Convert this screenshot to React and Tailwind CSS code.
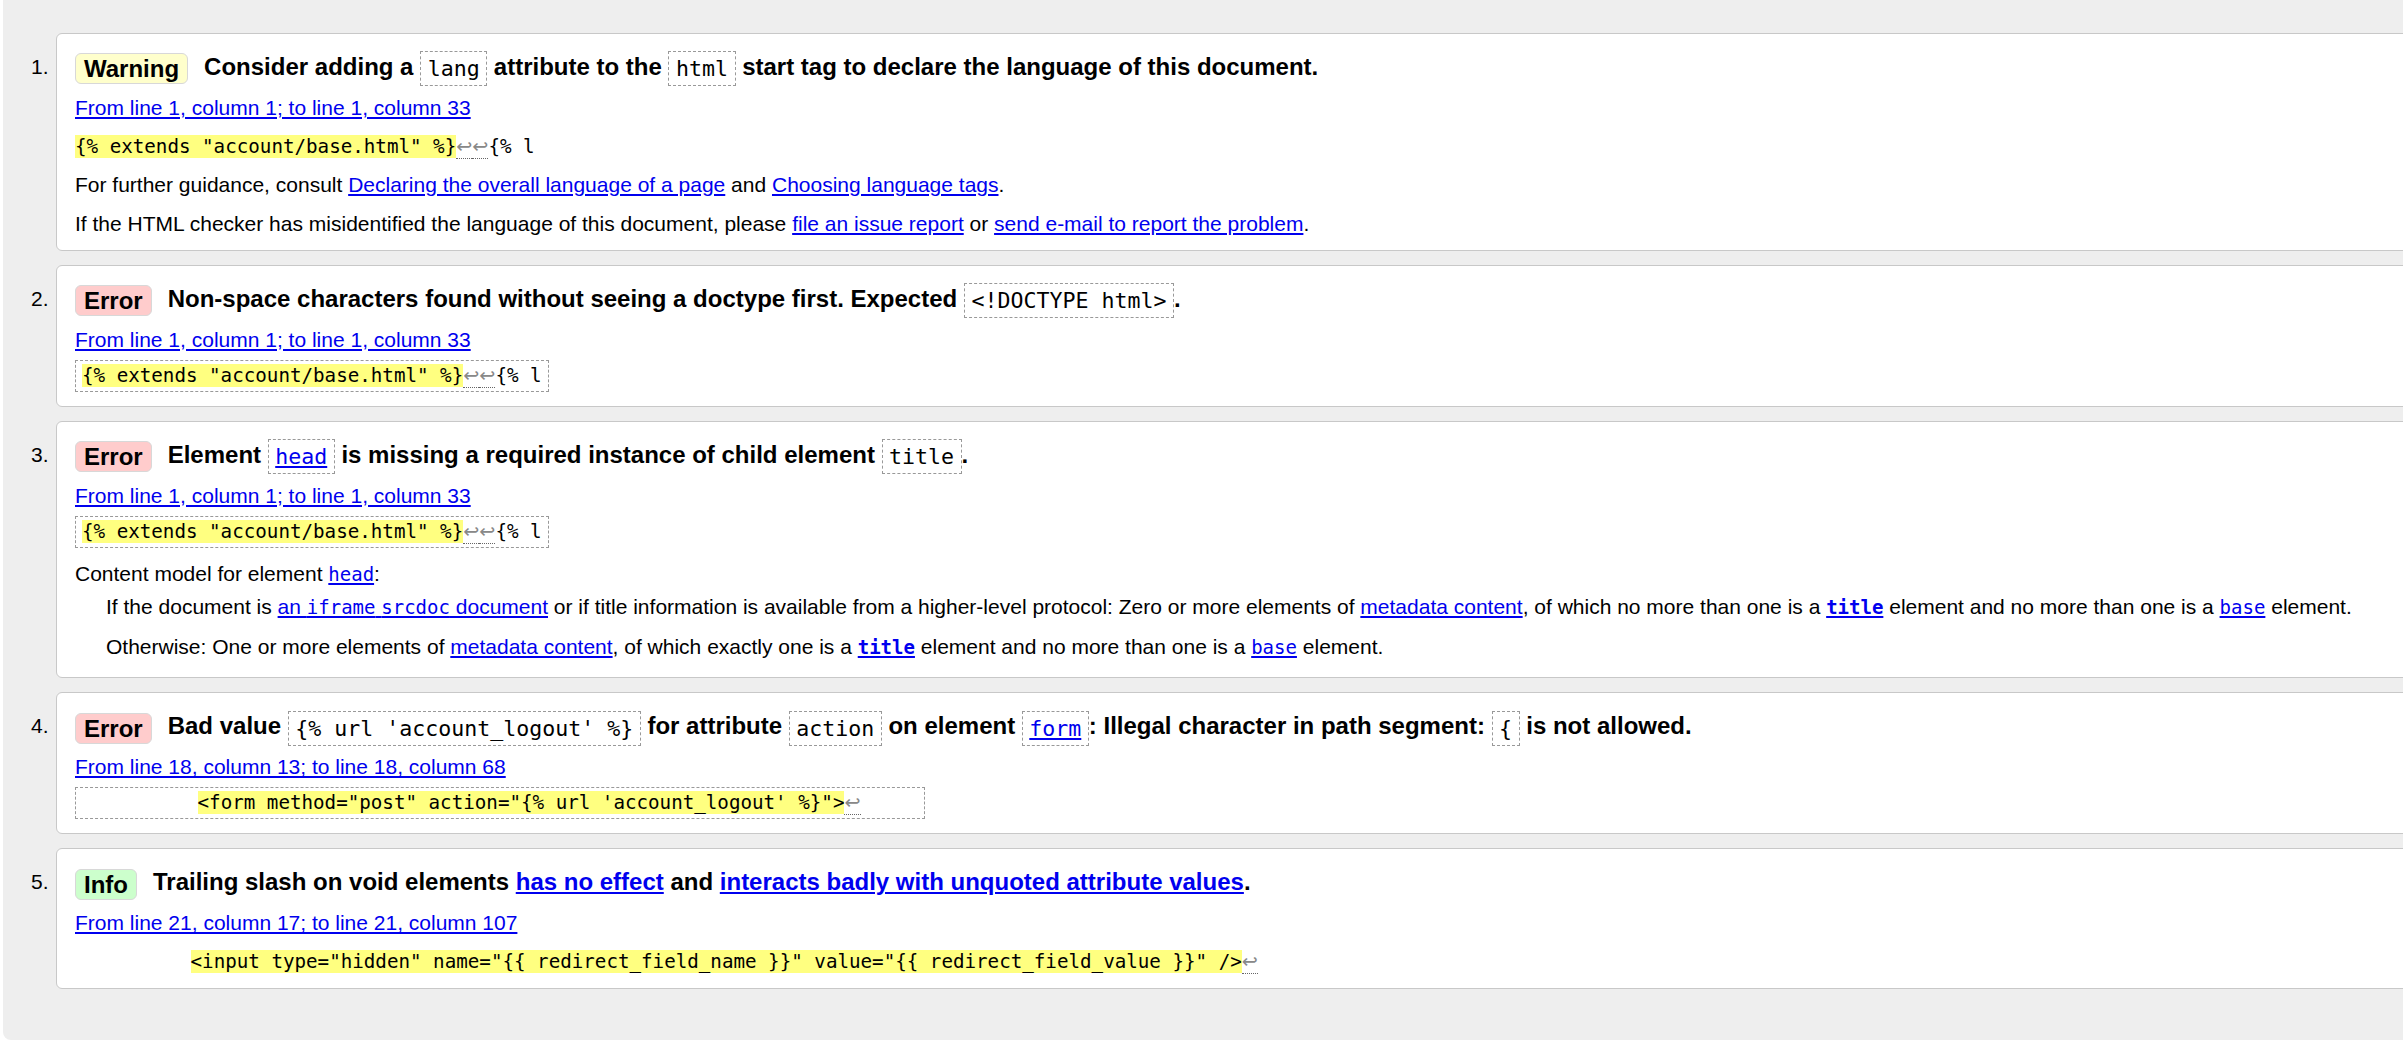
const sans = "font-['Liberation_Sans',Arial,sans-serif]"
const mono = "font-['DejaVu_Sans_Mono',monospace]"

function Badge({ kind, children }) {
  const tone =
    kind === 'warning'
      ? 'bg-[#ffffcc]'
      : kind === 'info'
      ? 'bg-[#ccffcc]'
      : 'bg-[#ffcccc]'
  return (
    <span
      className={`inline-block align-middle mr-[16px] px-[8px] py-[1px] leading-[27px] border border-[#d8d8d8] rounded-[6px] ${tone}`}
    >
      {children}
    </span>
  )
}

function Code({ link, children }) {
  return (
    <span
      className={`inline-block align-middle border border-dashed border-[#999] px-[6.5px] py-[4px] leading-[25px] text-[21.6px] font-normal ${mono}`}
    >
      {link ? <a className="text-[#0000ee] underline">{children}</a> : children}
    </span>
  )
}

function A({ children, bold }) {
  return (
    <a className={`text-[#0000ee] underline ${bold ? 'font-bold' : ''}`}>
      {children}
    </a>
  )
}

function M({ children, bold }) {
  return (
    <code className={`text-[19px] ${mono} ${bold ? 'font-bold' : ''}`}>
      {children}
    </code>
  )
}

function Mark({ children }) {
  return <b className="font-normal bg-[#ffff80]">{children}</b>
}

function LF() {
  return (
    <span className="font-['DejaVu_Sans',sans-serif] text-[#888] border-b border-dotted border-[#666]">
      ↩
    </span>
  )
}

function Location({ children }) {
  return (
    <p className="mt-[11px] leading-[24px]">
      <a className="text-[#0000ee] underline">{children}</a>
    </p>
  )
}

function CodeLine({ children }) {
  return (
    <p className={`mt-[14.5px] leading-[24px] text-[19.2px] whitespace-pre ${mono}`}>
      {children}
    </p>
  )
}

function CodeBox({ children }) {
  return (
    <p className="mt-[8px] h-[32px] leading-[24px]">
      <code
        className={`inline-block border border-dashed border-[#999] px-[6px] py-[3px] leading-[24px] text-[19.2px] whitespace-pre ${mono}`}
      >
        {children}
      </code>
    </p>
  )
}

function Message({ n, badge, kind, title, children, last }) {
  return (
    <li className={`flex ${last ? '' : 'mb-[14px]'}`}>
      <div className="w-[25px] shrink-0 pt-[16px] leading-[36px]">{n}.</div>
      <div className="flex-1 bg-white border border-[#c8c8c8] rounded-[6px] pl-[18px] pt-[15px] pb-[14px]">
        <p className="h-[36px] text-[24px] font-bold leading-[36px] whitespace-nowrap">
          <Badge kind={kind}>{badge}</Badge>
          {title}
        </p>
        {children}
      </div>
    </li>
  )
}

const extract = (
  <>
    <Mark>{'{% extends "account/base.html" %}'}</Mark>
    <LF />
    <LF />
    {'{% l'}
  </>
)

export default function App() {
  return (
    <div className={`w-full min-h-[1051px] overflow-hidden bg-white text-black text-[21px] ${sans}`}>
      <ol className="ml-[3px] w-[2500px] bg-[#eeeeee] rounded-bl-[8px] pt-[33px] pb-[51px] pl-[28px]">
        <Message
          n={1}
          kind="warning"
          badge="Warning"
          title={
            <>
              Consider adding a <Code>lang</Code> attribute to the <Code>html</Code> start tag
              to declare the language of this document.
            </>
          }
        >
          <Location>From line 1, column 1; to line 1, column 33</Location>
          <CodeLine>{extract}</CodeLine>
          <p className="mt-[14.5px] leading-[24px]">
            For further guidance, consult <A>Declaring the overall language of a page</A> and{' '}
            <A>Choosing language tags</A>.
          </p>
          <p className="mt-[14.5px] leading-[24px]">
            If the HTML checker has misidentified the language of this document, please{' '}
            <A>file an issue report</A> or <A>send e-mail to report the problem</A>.
          </p>
        </Message>

        <Message
          n={2}
          kind="error"
          badge="Error"
          title={
            <>
              Non-space characters found without seeing a doctype first. Expected{' '}
              <Code>{'<!DOCTYPE html>'}</Code>.
            </>
          }
        >
          <Location>From line 1, column 1; to line 1, column 33</Location>
          <CodeBox>{extract}</CodeBox>
        </Message>

        <Message
          n={3}
          kind="error"
          badge="Error"
          title={
            <>
              Element <Code link>head</Code> is missing a required instance of child element{' '}
              <Code>title</Code>.
            </>
          }
        >
          <Location>From line 1, column 1; to line 1, column 33</Location>
          <CodeBox>{extract}</CodeBox>
          <p className="mt-[14px] leading-[24px]">
            Content model for element{' '}
            <A>
              <M>head</M>
            </A>
            :
          </p>
          <div className="pl-[31px] pb-[4.4px]">
            <p className="mt-[9px] leading-[24px] whitespace-nowrap">
              If the document is{' '}
              <A>
                an <M>iframe</M> <M>srcdoc</M> document
              </A>{' '}
              or if title information is available from a higher-level protocol: Zero or more
              elements of <A>metadata content</A>, of which no more than one is a{' '}
              <A>
                <M bold>title</M>
              </A>{' '}
              element and no more than one is a{' '}
              <A>
                <M>base</M>
              </A>{' '}
              element.
            </p>
            <p className="mt-[16.6px] leading-[24px]">
              Otherwise: One or more elements of <A>metadata content</A>, of which exactly one is
              a{' '}
              <A>
                <M bold>title</M>
              </A>{' '}
              element and no more than one is a{' '}
              <A>
                <M>base</M>
              </A>{' '}
              element.
            </p>
          </div>
        </Message>

        <Message
          n={4}
          kind="error"
          badge="Error"
          title={
            <>
              Bad value <Code>{"{% url 'account_logout' %}"}</Code> for attribute{' '}
              <Code>action</Code> on element <Code link>form</Code>: Illegal character in path
              segment: <Code>{'{'}</Code> is not allowed.
            </>
          }
        >
          <Location>From line 18, column 13; to line 18, column 68</Location>
          <CodeBox>
            {'          '}
            <Mark>{`<form method="post" action="{% url 'account_logout' %}">`}</Mark>
            <LF />
            {'     '}
          </CodeBox>
        </Message>

        <Message
          n={5}
          kind="info"
          badge="Info"
          last
          title={
            <>
              Trailing slash on void elements <A>has no effect</A> and{' '}
              <A>interacts badly with unquoted attribute values</A>.
            </>
          }
        >
          <Location>From line 21, column 17; to line 21, column 107</Location>
          <CodeLine>
            {'          '}
            <Mark>
              {'<input type="hidden" name="{{ redirect_field_name }}" value="{{ redirect_field_value }}" />'}
            </Mark>
            <LF />
          </CodeLine>
        </Message>
      </ol>
    </div>
  )
}
